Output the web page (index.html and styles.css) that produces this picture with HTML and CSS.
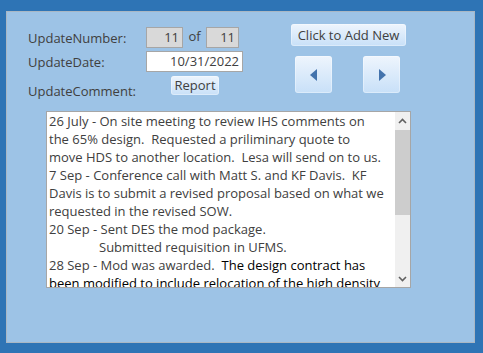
FILE: index.html
```html
<!DOCTYPE html>
<html>
<head>
<meta charset="utf-8">
<link rel="stylesheet" href="styles.css">
</head>
<body>
<div class="panel">
  <div class="top">
    <div class="fields">
      <div class="row">
        <span class="label">UpdateNumber:</span>
        <span class="box num n1">11</span>
        <span class="of">of</span>
        <span class="box num n2">11</span>
      </div>
      <div class="row r2">
        <span class="label">UpdateDate:</span>
        <span class="box date">10/31/2022</span>
      </div>
      <div class="row r3">
        <span class="label lc">UpdateComment:</span>
        <button class="btn report">Report</button>
      </div>
    </div>
    <div class="actions">
      <button class="btn addnew">Click to Add New</button>
      <div class="nav">
        <button class="btn navbtn"><svg width="8" height="12" viewBox="0 0 8 12"><polygon points="7,0 7,12 0,6" fill="#4373ad"/></svg></button>
        <button class="btn navbtn"><svg width="8" height="12" viewBox="0 0 8 12"><polygon points="1,0 1,12 8,6" fill="#4373ad"/></svg></button>
      </div>
    </div>
  </div>
  <div class="comment">
    <div class="text">
      <div class="ln">26 July - On site meeting to review IHS comments on</div>
      <div class="ln">the 65% design.&nbsp; Requested a priliminary quote to</div>
      <div class="ln">move HDS to another location.&nbsp; Lesa will send on to us.</div>
      <div class="ln">7 Sep - Conference call with Matt S. and KF Davis.&nbsp; KF</div>
      <div class="ln">Davis is to submit a revised proposal based on what we</div>
      <div class="ln">requested in the revised SOW.</div>
      <div class="ln">20 Sep - Sent DES the mod package.</div>
      <div class="ln indent">Submitted requisition in UFMS.</div>
      <div class="ln">28 Sep - Mod was awarded.&nbsp; <span class="blk">The design contract has</span></div>
      <div class="ln blk">been modified to include relocation of the high density</div>
    </div>
    <div class="scroll">
      <div class="arrow"><svg width="9" height="6" viewBox="0 0 9 6"><polyline points="1,5 4.5,1.5 8,5" fill="none" stroke="#606060" stroke-width="1.6"/></svg></div>
      <div class="track"><div class="thumb"></div></div>
      <div class="arrow"><svg width="9" height="6" viewBox="0 0 9 6"><polyline points="1,1 4.5,4.5 8,1" fill="none" stroke="#606060" stroke-width="1.6"/></svg></div>
    </div>
  </div>
</div>
</body>
</html>
```

FILE: styles.css
```css
html, body {
  margin: 0;
  padding: 0;
}
body {
  background: #2e74b5;
  width: 483px;
  height: 353px;
  overflow: hidden;
  font-family: "Open Sans", "Liberation Sans", sans-serif;
  font-size: 13px;
  color: #404040;
}
.panel {
  box-sizing: border-box;
  margin: 11px 0 0 6px;
  width: 469px;
  height: 332px;
  background: #9dc3e6;
  border: 1px solid #a9b7c4;
}
.top {
  display: flex;
  padding-left: 21px;
}
.fields {
  width: 263px;
  padding-top: 15px;
}
.row {
  display: flex;
  align-items: center;
  height: 21px;
}
.r2 {
  margin-top: 3px;
}
.r3 {
  margin-top: 4px;
  align-items: flex-start;
  height: 24px;
}
.label {
  width: 118px;
  line-height: 18px;
  white-space: nowrap;
}
.lc {
  margin-top: 6px;
}
.box {
  box-sizing: border-box;
  height: 21px;
  line-height: 19px;
  border: 1px solid #a6a6a6;
  text-align: right;
  padding-right: 3px;
  color: #404040;
}
.num {
  background: #d9d9d9;
}
.n1 {
  width: 37px;
}
.n2 {
  width: 33px;
}
.of {
  width: 23px;
  text-align: center;
  line-height: 18px;
  margin-top: -3px;
}
.date {
  width: 97px;
  background: #ffffff;
}
.btn {
  font-family: inherit;
  font-size: 13px;
  color: #404040;
  border: none;
  border-radius: 3px;
  padding: 0;
  margin: 0;
  background: linear-gradient(#eef5fd, #c8e0f8);
  box-shadow: inset 0 0 0 1px rgba(255,255,255,0.35);
}
.report {
  margin-left: 25px;
  width: 48px;
  height: 19px;
  line-height: 17px;
}
.actions {
  padding-top: 12px;
}
.addnew {
  width: 115px;
  height: 22px;
  line-height: 20px;
}
.nav {
  display: flex;
  gap: 31px;
  margin-top: 10px;
  padding-left: 4px;
}
.navbtn {
  width: 37px;
  height: 37px;
  display: flex;
  align-items: center;
  justify-content: center;
}
.comment {
  box-sizing: border-box;
  display: flex;
  margin: 11px 0 0 39px;
  width: 365px;
  height: 177px;
  border: 1px solid #a6a6a6;
  background: #ffffff;
}
.text {
  flex: 1;
  overflow: hidden;
  padding-left: 2px;
}
.ln {
  line-height: 18px;
  white-space: nowrap;
}
.indent {
  padding-left: 50px;
}
.blk {
  color: #000000;
}
.scroll {
  width: 15px;
  display: flex;
  flex-direction: column;
  background: #f0f0f0;
}
.arrow {
  height: 17px;
  display: flex;
  align-items: center;
  justify-content: center;
}
.track {
  flex: 1;
}
.thumb {
  margin: 1px 0 0 0;
  height: 85px;
  background: #cdcdcd;
}
```
